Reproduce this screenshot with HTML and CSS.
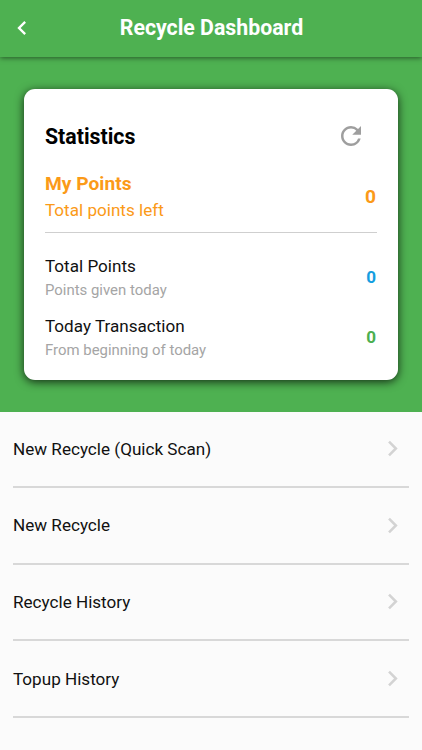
FILE: index.html
```html
<!DOCTYPE html>
<html lang="en">
<head>
    <meta charset="UTF-8">
    <meta name="viewport" content="width=device-width, initial-scale=1.0">
    <title>Recycle Dashboard</title>
    <link rel="stylesheet" href="styles.css">
</head>
<body>
    <header class="app-bar">
        <svg class="back-icon" viewBox="0 0 24 24"><path d="M15.41 7.41L14 6l-6 6 6 6 1.41-1.41L10.83 12z"/></svg>
        <h1 class="app-title">Recycle Dashboard</h1>
    </header>

    <section class="hero">
        <div class="card">
            <div class="card-header">
                <h2 class="card-title">Statistics</h2>
                <svg class="refresh-icon" viewBox="0 0 24 24"><path d="M17.65 6.35A7.958 7.958 0 0 0 12 4c-4.42 0-7.99 3.58-7.99 8s3.57 8 7.99 8c3.73 0 6.84-2.55 7.73-6h-2.08A5.99 5.99 0 0 1 12 18c-3.31 0-6-2.69-6-6s2.69-6 6-6c1.66 0 3.14.69 4.22 1.78L13 11h7V4l-2.35 2.35z"/></svg>
            </div>

            <div class="stat stat-main">
                <div>
                    <p class="stat-name">My Points</p>
                    <p class="stat-note">Total points left</p>
                </div>
                <span class="stat-value">0</span>
            </div>

            <div class="stat">
                <div>
                    <p class="stat-name">Total Points</p>
                    <p class="stat-note">Points given today</p>
                </div>
                <span class="stat-value blue">0</span>
            </div>

            <div class="stat">
                <div>
                    <p class="stat-name">Today Transaction</p>
                    <p class="stat-note">From beginning of today</p>
                </div>
                <span class="stat-value green">0</span>
            </div>
        </div>
    </section>

    <nav class="menu">
        <a class="menu-item">
            <span>New Recycle (Quick Scan)</span>
            <svg class="chevron" viewBox="0 0 24 24"><path d="M10 6L8.59 7.41 13.17 12l-4.58 4.59L10 18l6-6z"/></svg>
        </a>
        <a class="menu-item">
            <span>New Recycle</span>
            <svg class="chevron" viewBox="0 0 24 24"><path d="M10 6L8.59 7.41 13.17 12l-4.58 4.59L10 18l6-6z"/></svg>
        </a>
        <a class="menu-item">
            <span>Recycle History</span>
            <svg class="chevron" viewBox="0 0 24 24"><path d="M10 6L8.59 7.41 13.17 12l-4.58 4.59L10 18l6-6z"/></svg>
        </a>
        <a class="menu-item">
            <span>Topup History</span>
            <svg class="chevron" viewBox="0 0 24 24"><path d="M10 6L8.59 7.41 13.17 12l-4.58 4.59L10 18l6-6z"/></svg>
        </a>
    </nav>
</body>
</html>
```

FILE: styles.css
```css
* {
    box-sizing: border-box;
}

body {
    margin: 0;
    background: #fbfbfb;
    color: #111;
    font-family: Roboto, sans-serif;
    overflow: hidden;
}

h1, h2, p {
    margin: 0;
}

.app-bar {
    display: grid;
    grid-template-columns: 28px 1fr 28px;
    align-items: center;
    height: 57px;
    padding: 0 7px 2px 8px;
    background: #4eb151;
    color: white;
    box-shadow: 0 1px 5px rgba(0, 0, 0, 0.5);
    position: relative;
}

.back-icon {
    width: 28px;
    height: 28px;
    fill: white;
}

.app-title {
    font-size: 21.3px;
    font-weight: 700;
    text-align: center;
}

.hero {
    height: 354.5px;
    padding: 32px 24px;
    background: #4eb151;
}

.card {
    height: 290.5px;
    padding: 32px 21px 0;
    background: white;
    border-radius: 11px;
    box-shadow: 0 2px 10px rgba(0, 0, 0, 0.75);
}

.card-header {
    display: flex;
    align-items: center;
    justify-content: space-between;
    height: 30px;
    padding-right: 11px;
}

.card-title {
    color: black;
    font-size: 21.3px;
    font-weight: 700;
}

.refresh-icon {
    width: 30px;
    height: 30px;
    fill: #9e9e9e;
}

.stat {
    display: flex;
    align-items: center;
    justify-content: space-between;
    height: 60px;
}

.stat-name {
    font-size: 17.1px;
    line-height: 24px;
}

.stat-note {
    color: #a5a5a5;
    font-size: 14.93px;
    line-height: 24px;
}

.stat-value {
    padding: 0 1px 2px 0;
    font-size: 17.1px;
    font-weight: 700;
}

.stat-main {
    height: 82px;
    margin-bottom: 15px;
    padding-top: 11px;
    border-bottom: 1px solid #cfcfcf;
    color: #fb9a18;
}

.stat-main .stat-name {
    font-size: 19.2px;
    font-weight: 700;
    line-height: 26px;
}

.stat-main .stat-note {
    color: #fb9a18;
    font-size: 17.1px;
    line-height: 26px;
}

.stat-main .stat-value {
    font-size: 19.2px;
}

.blue {
    color: #159ee0;
}

.green {
    color: #4caf50;
}

.menu {
    padding: 0 13px;
}

.menu-item {
    display: flex;
    align-items: center;
    justify-content: space-between;
    height: 76.6px;
    padding-right: 1px;
    border-bottom: 2px solid #d8d8d8;
    font-size: 17.1px;
}

.chevron {
    width: 31px;
    height: 31px;
    fill: #d3d3d3;
}
```
